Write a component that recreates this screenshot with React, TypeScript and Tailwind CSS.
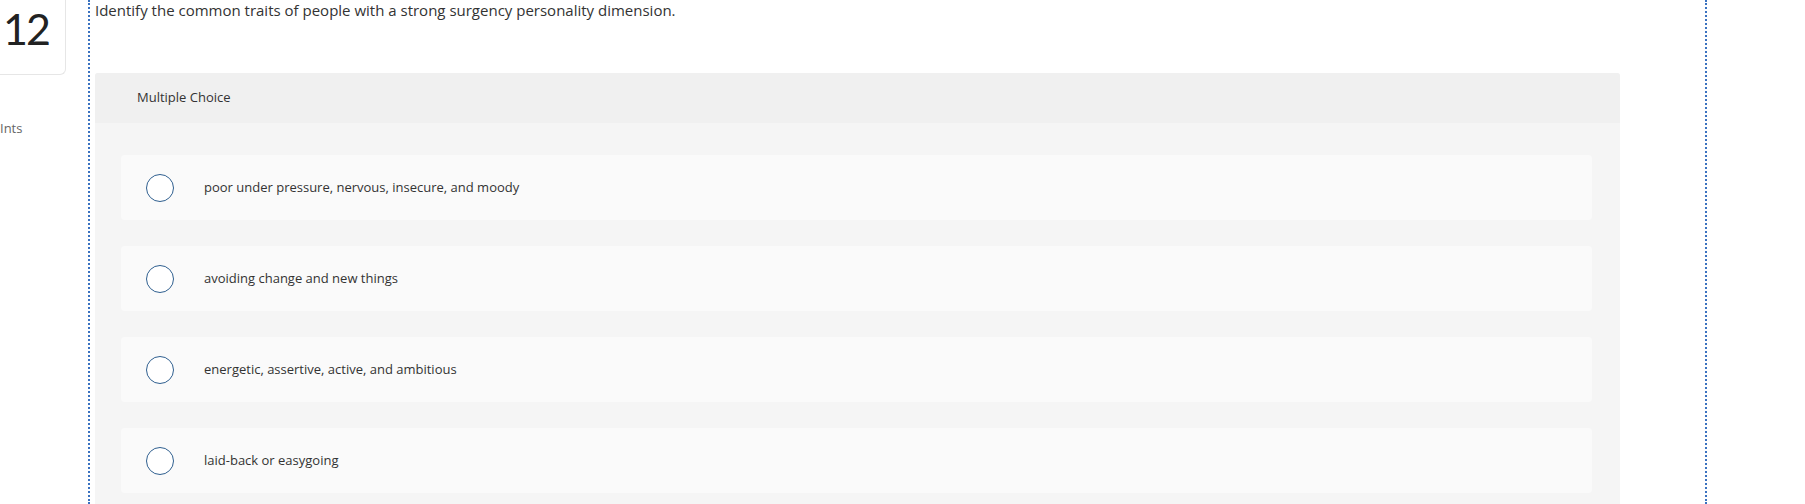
import React from "react";

const options = [
  "poor under pressure, nervous, insecure, and moody",
  "avoiding change and new things",
  "energetic, assertive, active, and ambitious",
  "laid-back or easygoing",
];

export default function App() {
  return (
    <div
      className="flex h-[504px] w-[1805px] overflow-hidden bg-white text-[#333333]"
      style={{ fontFamily: '"Open Sans", "Noto Sans", sans-serif' }}
    >
      <div className="w-[88px] shrink-0">
        <div className="flex h-[75px] w-[66px] items-start rounded-br-md border-b border-r border-[#e6e6e6] pl-[3px] pt-[6px]">
          <span
            className="text-[43px] leading-[46px] font-normal tracking-[-2px] text-[#222222]"
            style={{ fontFamily: 'Lato, "Open Sans", sans-serif' }}
          >
            12
          </span>
        </div>
        <div className="mt-[45px] text-[13px] leading-[16px] text-[#666666]">Ints</div>
      </div>
      <div className="flex w-[1619px] shrink-0 flex-col border-l-2 border-r-2 border-dotted border-[#3a72c0] pl-[5px]">
        <p className="text-[15px] leading-[20px] text-[#333333]">
          Identify the common traits of people with a strong surgency personality dimension.
        </p>
        <div className="mt-[53px] w-[1525px] flex-1 rounded-t-[3px] bg-[#f5f5f5]">
          <div className="flex h-[50px] items-center rounded-t-[3px] bg-[#f0f0f0] pl-[42px] text-[13px] text-[#333333]">
            Multiple Choice
          </div>
          <div className="flex flex-col gap-[26px] pl-[26px] pr-[28px] pt-[32px]">
            {options.map((o) => (
              <div
                key={o}
                className="flex h-[65px] items-center rounded-[4px] bg-[#fafafa] pl-[25px]"
              >
                <span className="h-[28px] w-[28px] shrink-0 rounded-full border-[1.5px] border-[#2f5f8f] bg-white" />
                <span className="ml-[30px] text-[13px] text-[#333333]">{o}</span>
              </div>
            ))}
          </div>
        </div>
      </div>
    </div>
  );
}
